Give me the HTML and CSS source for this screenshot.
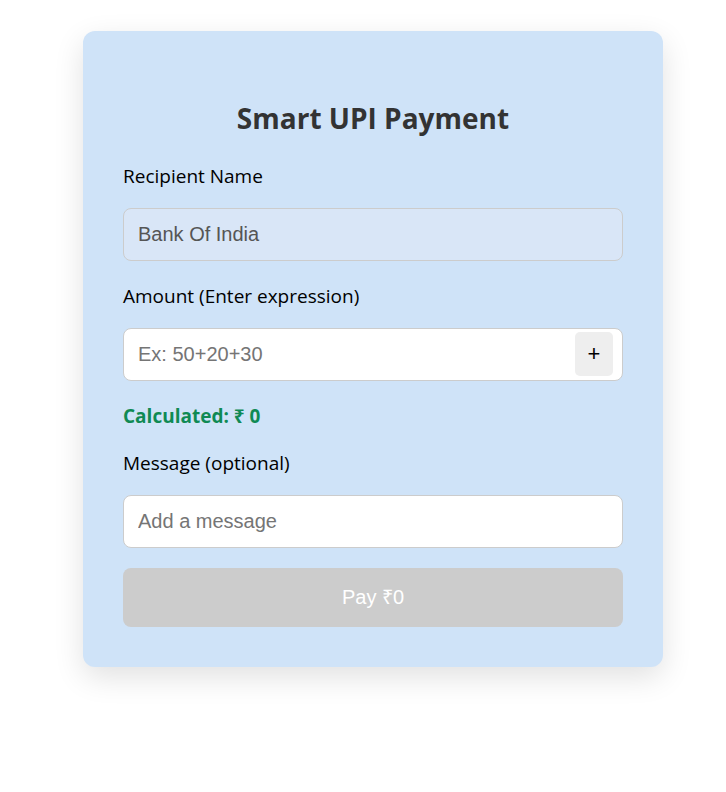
FILE: index.html
```html
<!DOCTYPE html>
<html lang="en">
<head>
<meta charset="utf-8">
<meta name="viewport" content="width=device-width, initial-scale=1">
<title>Smart UPI Payment</title>
<link rel="stylesheet" href="styles.css">
</head>
<body>
<main class="card">
  <h1 class="title">Smart UPI Payment</h1>
  <form class="form">
    <div class="field">
      <label for="recipient">Recipient Name</label>
      <input class="input input-locked" id="recipient" type="text" value="Bank Of India" readonly>
    </div>
    <div class="field">
      <label for="amount">Amount (Enter expression)</label>
      <div class="amount">
        <input class="input" id="amount" type="text" placeholder="Ex: 50+20+30">
        <button class="plus" type="button">+</button>
      </div>
    </div>
    <output class="total" for="amount">Calculated: ₹ 0</output>
    <div class="field">
      <label for="message">Message (optional)</label>
      <input class="input" id="message" type="text" placeholder="Add a message">
    </div>
    <button class="pay" type="submit" disabled>Pay ₹0</button>
  </form>
</main>
</body>
</html>
```
FILE: styles.css
```css
* {
  box-sizing: border-box;
}

body {
  margin: 0;
  padding: 31px 20px 40px 40px;
  background: #fff;
  color: #000;
  font-family: "Segoe UI", "Open Sans", "Noto Sans", sans-serif;
  font-size: 19px;
  line-height: 27px;
}

.card {
  max-width: 580px;
  margin: 0 auto;
  padding: 67px 40px 40px;
  border-radius: 12px;
  background: #cfe3f8;
  box-shadow: 0 10px 30px rgba(0, 0, 0, 0.12);
}

.title {
  margin: 0 0 25px;
  color: #333;
  font-size: 28px;
  font-weight: 700;
  line-height: 40px;
  text-align: center;
}

.form {
  display: flex;
  flex-direction: column;
  gap: 20px;
}

.field {
  display: flex;
  flex-direction: column;
  gap: 18px;
}

.field + .field,
.field + .total {
  margin-top: 2px;
}

.input {
  width: 100%;
  height: 53px;
  padding: 14px;
  border: 1px solid #ccc;
  border-radius: 8px;
  background: #fff;
  color: #000;
  font: 20px/23px "Liberation Sans", Arial, sans-serif;
}

.input::placeholder {
  color: #757575;
}

.input-locked {
  background: #d9e6f7;
  color: #555;
}

.amount {
  position: relative;
}

.amount .input {
  display: block;
  padding-right: 58px;
}

.plus {
  position: absolute;
  top: 4px;
  right: 10px;
  width: 38px;
  height: 44px;
  padding: 0;
  border: 0;
  border-radius: 5px;
  background: #eee;
  color: #000;
  font: 22px/44px "Liberation Sans", Arial, sans-serif;
  cursor: pointer;
}

.total {
  color: #0f8a54;
  font-weight: 700;
}

.pay {
  width: 100%;
  padding: 18px;
  border: 0;
  border-radius: 8px;
  background: #ccc;
  color: #fff;
  font: 20px/23px "Liberation Sans", Arial, sans-serif;
}
```
